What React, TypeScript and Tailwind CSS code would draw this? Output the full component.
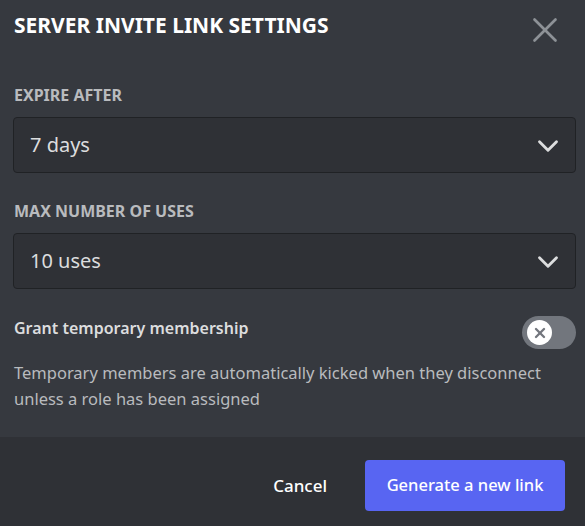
import { ChevronDown, X } from 'lucide-react';

const Select = ({ value }: { value: string }) => (
    <div className="flex items-center justify-between h-[56px] rounded-[4px] bg-[#2f3136] border border-[#202225] pl-[16px] pr-[10px]">
        <span className="text-[20px] text-[#dcddde]">{value}</span>
        <ChevronDown className="w-[34px] h-[34px] text-[#dcddde] mt-[2px]" strokeWidth={2} />
    </div>
);

const App = () => {
    return (
        <div
            className="w-[585px] h-[526px] bg-[#36393f] flex flex-col overflow-hidden"
            style={{ fontFamily: '"Noto Sans", "Open Sans", sans-serif' }}
        >
            <div className="flex-1 pl-[13px] pr-[9px] pt-[11px]">
                {/* Header */}
                <div className="flex items-start justify-between h-[28px]">
                    <h1 className="text-[21px] font-bold text-white leading-[28px] pl-[1px]">SERVER INVITE LINK SETTINGS</h1>
                    <X className="w-[42px] h-[42px] text-[#8e9297] -mt-[2px] mr-[10px]" strokeWidth={1.5} />
                </div>

                <div className="mt-[46px] text-[16px] font-bold text-[#b9bbbe] leading-[20px] pl-[1px]">EXPIRE AFTER</div>
                <div className="mt-[12px]">
                    <Select value="7 days" />
                </div>

                <div className="mt-[28px] text-[16px] font-bold text-[#b9bbbe] leading-[20px] pl-[1px]">MAX NUMBER OF USES</div>
                <div className="mt-[12px]">
                    <Select value="10 uses" />
                </div>

                {/* Toggle row */}
                <div className="flex items-start justify-between mt-[27px]">
                    <span className="text-[16px] font-semibold text-[#dcddde] leading-[24px] pl-[1px]">Grant temporary membership</span>
                    <div className="w-[54px] h-[33px] rounded-full bg-[#72767d] flex items-center pl-[5px]">
                        <div className="w-[25px] h-[25px] rounded-full bg-white flex items-center justify-center">
                            <X className="w-[16px] h-[16px] text-[#72767d]" strokeWidth={3.5} />
                        </div>
                    </div>
                </div>
                <p className="mt-[11px] text-[16.5px] text-[#b9bbbe] leading-[26px] pl-[1px]">
                    Temporary members are automatically kicked when they disconnect unless a role has been assigned
                </p>
            </div>

            {/* Footer */}
            <div className="h-[89px] bg-[#2f3136] flex items-start justify-end pr-[20px] pt-[23px] gap-[38px]">
                <span className="h-[51px] flex items-center text-[17px] font-medium text-white">Cancel</span>
                <button className="h-[51px] w-[200px] rounded-[4px] bg-[#5865f2] text-[16.5px] font-medium text-white">
                    Generate a new link
                </button>
            </div>
        </div>
    );
};

export default App;
